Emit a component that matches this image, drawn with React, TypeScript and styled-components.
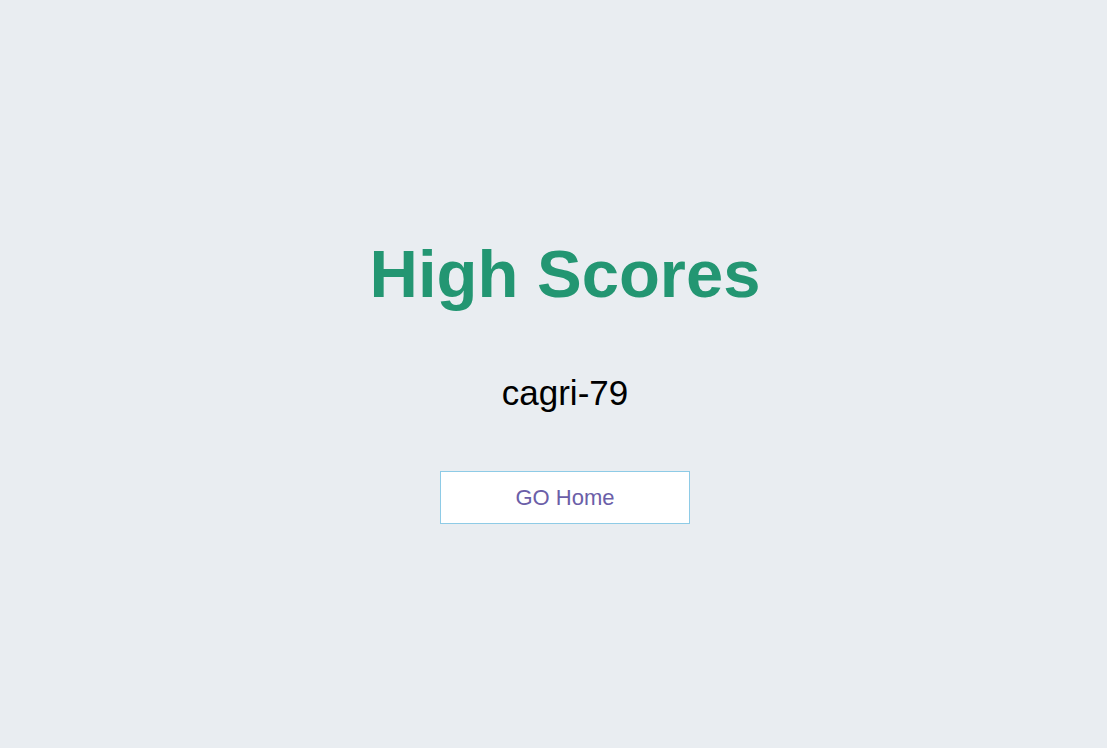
import React from "react";
import styled, { createGlobalStyle } from "styled-components";

const Global = createGlobalStyle`
  html, body { margin: 0; padding: 0; background: #e9edf1; }
  body { font-family: "Liberation Sans", Arial, sans-serif; }
`;

const Page = styled.main`
  min-height: 100vh;
  box-sizing: border-box;
  padding: 240px 0 0 23px;
  display: flex;
  flex-direction: column;
  align-items: center;
  background: #e9edf1;
`;

const Title = styled.h1`
  margin: 0;
  font-size: 67px;
  line-height: 67px;
  font-weight: 700;
  color: #239672;
`;

const Score = styled.p`
  margin: 68px 0 0;
  font-size: 35px;
  line-height: 35px;
  color: #000;
`;

const HomeButton = styled.button`
  margin-top: 61px;
  width: 250px;
  height: 53px;
  box-sizing: border-box;
  background: #ffffff;
  border: 1px solid #8ecbe6;
  color: #6b5ea8;
  font-family: "Liberation Sans", Arial, sans-serif;
  font-size: 22px;
  padding: 0;
  cursor: pointer;
`;

export default function App() {
  return (
    <>
      <Global />
      <Page>
        <Title>High Scores</Title>
        <Score>cagri-79</Score>
        <HomeButton>GO Home</HomeButton>
      </Page>
    </>
  );
}
